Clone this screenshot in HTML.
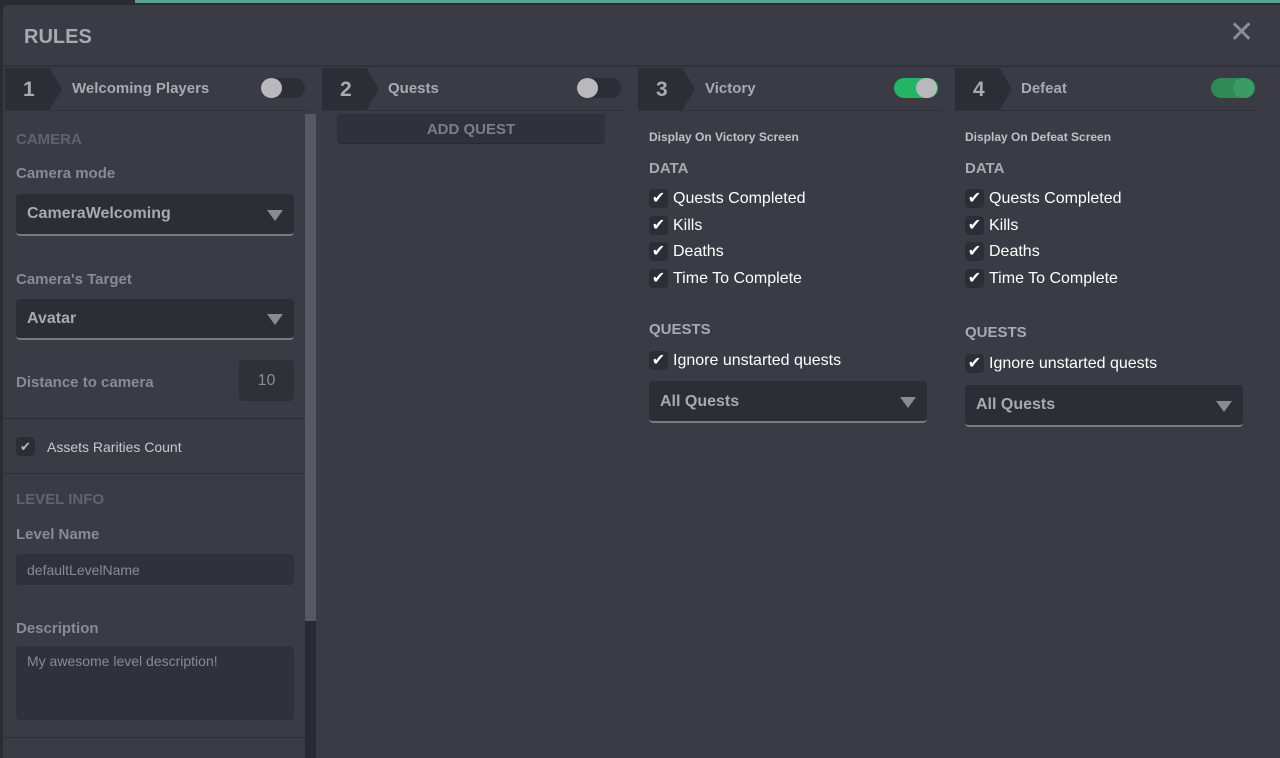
<!DOCTYPE html>
<html><head><style>
*{margin:0;padding:0;box-sizing:border-box}
body{width:1280px;height:758px;background:#2b2c32;font-family:"Liberation Sans",sans-serif;position:relative;overflow:hidden}
.a{position:absolute}
.panel{left:3px;top:5px;width:1277px;height:753px;background:#3a3b45;border-radius:6px 0 0 0}
.t{color:#a9aab0;font-weight:bold}
.hline{height:2px;background:#30313a}
.num{width:57px;height:42px;background:#2c2d35;clip-path:polygon(0 0,78% 0,100% 50%,78% 100%,0 100%)}
.num span{position:absolute;left:18px;top:10px;font-size:21px;color:#a9aab0;font-weight:bold}
.tgl{width:44px;height:20px;border-radius:10px;background:#2c2d35}
.tgl i{position:absolute;top:0;width:21px;height:20px;border-radius:50%;background:#b9b9bd}
.dd{background:#2c2d35;border-radius:4px;border-bottom:2px solid #7a7b80}
.tri{width:0;height:0;border-left:8px solid transparent;border-right:8px solid transparent;border-top:11px solid #8a8b90}
.cb{width:19px;height:19px;border-radius:4px;background:#2c2d35;color:#fff;font-size:16px;line-height:19px;text-align:center}
.w{color:#fff;font-size:16px}
.lbl{color:#8a8b92;font-weight:bold;font-size:15px}
</style></head><body>
<div class="a" style="left:135px;top:0;width:1145px;height:3px;background:#5aa392"></div>
<div class="a panel"></div>
<div class="a t" style="left:24px;top:26px;font-size:20px">RULES</div>
<div class="a" style="left:1229px;top:20px;color:#8c8d93;font-size:30px;line-height:26px">✕</div>
<div class="a hline" style="left:3px;top:65px;width:1277px"></div>

<!-- headers -->
<div class="a num" style="left:5px;top:68px"><span>1</span></div>
<div class="a t" style="left:72px;top:80px;font-size:15px">Welcoming Players</div>
<div class="a tgl" style="left:261px;top:78px"><i style="left:0"></i></div>
<div class="a hline" style="left:3px;top:110px;width:306px;height:1px"></div>

<div class="a num" style="left:322px;top:68px"><span>2</span></div>
<div class="a t" style="left:388px;top:80px;font-size:15px">Quests</div>
<div class="a tgl" style="left:577px;top:78px"><i style="left:0"></i></div>
<div class="a hline" style="left:322px;top:110px;width:305px;height:1px"></div>

<div class="a num" style="left:638px;top:68px"><span>3</span></div>
<div class="a t" style="left:705px;top:80px;font-size:15px">Victory</div>
<div class="a tgl" style="left:894px;top:78px;background:#23b565"><i style="left:22px;background:#b9b9bd"></i></div>
<div class="a hline" style="left:638px;top:110px;width:305px;height:1px"></div>

<div class="a num" style="left:955px;top:68px"><span>4</span></div>
<div class="a t" style="left:1021px;top:80px;font-size:15px">Defeat</div>
<div class="a tgl" style="left:1211px;top:78px;background:#2f8a56"><i style="left:22px;background:#3a9c64"></i></div>
<div class="a hline" style="left:955px;top:110px;width:305px;height:1px"></div>

<!-- column 1 -->
<div class="a" style="left:305px;top:114px;width:11px;height:644px;background:#2a2b32"></div>
<div class="a" style="left:305px;top:114px;width:11px;height:507px;background:#575862"></div>
<div class="a" style="left:16px;top:131px;color:#62636b;font-weight:bold;font-size:15px">CAMERA</div>
<div class="a lbl" style="left:16px;top:165px">Camera mode</div>
<div class="a dd" style="left:16px;top:194px;width:278px;height:42px"></div>
<div class="a t" style="left:27px;top:205px;font-size:16px;color:#a9aab0">CameraWelcoming</div>
<div class="a tri" style="left:267px;top:210px"></div>
<div class="a lbl" style="left:16px;top:271px">Camera's Target</div>
<div class="a dd" style="left:16px;top:299px;width:278px;height:41px"></div>
<div class="a t" style="left:27px;top:310px;font-size:16px">Avatar</div>
<div class="a tri" style="left:267px;top:314px"></div>
<div class="a lbl" style="left:16px;top:374px">Distance to camera</div>
<div class="a" style="left:239px;top:360px;width:55px;height:41px;background:#2f3038;border-radius:4px;color:#8a8b92;font-size:16px;text-align:center;line-height:41px">10</div>
<div class="a" style="left:0;top:418px;width:305px;height:1px;background:#2c2d35"></div>
<div class="a cb" style="left:16px;top:437px;color:#bbb;font-size:13px">✔</div>
<div class="a" style="left:47px;top:439px;color:#c8c9cc;font-size:14px">Assets Rarities Count</div>
<div class="a" style="left:0;top:473px;width:305px;height:1px;background:#2c2d35"></div>
<div class="a" style="left:16px;top:491px;color:#62636b;font-weight:bold;font-size:15px">LEVEL INFO</div>
<div class="a lbl" style="left:16px;top:526px">Level Name</div>
<div class="a" style="left:16px;top:554px;width:278px;height:31px;background:#30313a;border-radius:4px"></div>
<div class="a" style="left:27px;top:562px;color:#8a8b92;font-size:14px">defaultLevelName</div>
<div class="a lbl" style="left:16px;top:620px">Description</div>
<div class="a" style="left:16px;top:646px;width:278px;height:74px;background:#30313a;border-radius:4px"></div>
<div class="a" style="left:27px;top:653px;color:#8a8b92;font-size:14px">My awesome level description!</div>
<div class="a" style="left:0;top:737px;width:305px;height:1px;background:#2c2d35"></div>

<!-- column 2 -->
<div class="a" style="left:337px;top:114px;width:268px;height:30px;background:#30313a;border-radius:3px;border-bottom:1px solid #2a2b32;color:#7d7e85;font-weight:bold;font-size:15px;text-align:center;line-height:31px">ADD QUEST</div>

<!-- column 3 -->
<div class="a" style="left:649px;top:130px;color:#c0c1c5;font-weight:bold;font-size:12px">Display On Victory Screen</div>
<div class="a t" style="left:649px;top:160px;font-size:15px">DATA</div>
<div class="a cb" style="left:649px;top:189px">✔</div><div class="a w" style="left:673px;top:190px">Quests Completed</div>
<div class="a cb" style="left:649px;top:216px">✔</div><div class="a w" style="left:673px;top:217px">Kills</div>
<div class="a cb" style="left:649px;top:242px">✔</div><div class="a w" style="left:673px;top:243px">Deaths</div>
<div class="a cb" style="left:649px;top:269px">✔</div><div class="a w" style="left:673px;top:270px">Time To Complete</div>
<div class="a t" style="left:649px;top:321px;font-size:15px">QUESTS</div>
<div class="a cb" style="left:649px;top:351px">✔</div><div class="a w" style="left:673px;top:352px">Ignore unstarted quests</div>
<div class="a dd" style="left:649px;top:381px;width:278px;height:42px"></div>
<div class="a t" style="left:660px;top:393px;font-size:16px">All Quests</div>
<div class="a tri" style="left:900px;top:397px"></div>

<!-- column 4 -->
<div class="a" style="left:965px;top:130px;color:#c0c1c5;font-weight:bold;font-size:12px">Display On Defeat Screen</div>
<div class="a t" style="left:965px;top:160px;font-size:15px">DATA</div>
<div class="a cb" style="left:965px;top:189px">✔</div><div class="a w" style="left:989px;top:190px">Quests Completed</div>
<div class="a cb" style="left:965px;top:216px">✔</div><div class="a w" style="left:989px;top:217px">Kills</div>
<div class="a cb" style="left:965px;top:242px">✔</div><div class="a w" style="left:989px;top:243px">Deaths</div>
<div class="a cb" style="left:965px;top:269px">✔</div><div class="a w" style="left:989px;top:270px">Time To Complete</div>
<div class="a t" style="left:965px;top:324px;font-size:15px">QUESTS</div>
<div class="a cb" style="left:965px;top:354px">✔</div><div class="a w" style="left:989px;top:355px">Ignore unstarted quests</div>
<div class="a dd" style="left:965px;top:385px;width:278px;height:42px"></div>
<div class="a t" style="left:976px;top:396px;font-size:16px">All Quests</div>
<div class="a tri" style="left:1216px;top:401px"></div>
</body></html>
